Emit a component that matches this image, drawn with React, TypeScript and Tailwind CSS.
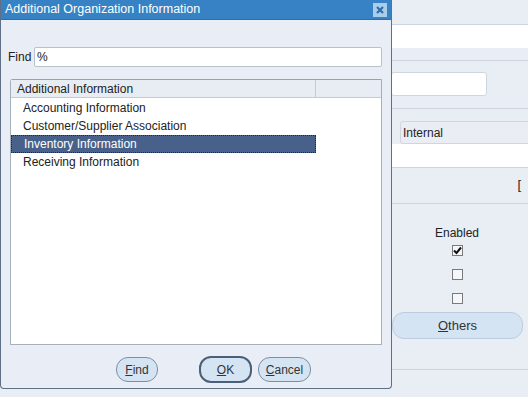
import React from 'react'

const rows = [
  'Accounting Information',
  'Customer/Supplier Association',
  'Inventory Information',
  'Receiving Information',
]

function Pill({ label, u, className }: { label: string; u: number; className: string }) {
  return (
    <button className={`flex items-center justify-center rounded-[12px] text-[12px] text-[#333] ${className}`}>
      {label.slice(0, u)}
      <span className="underline">{label[u]}</span>
      {label.slice(u + 1)}
    </button>
  )
}

function Checkbox({ checked }: { checked?: boolean }) {
  return (
    <div className="w-[11px] h-[11px] border border-[#7a7a7a] bg-[#f4f6f9] flex items-center justify-center">
      {checked && (
        <svg width="9" height="9" viewBox="0 0 9 9">
          <path d="M1 4.5 L3.5 7 L8 1.5" stroke="#111" strokeWidth="2" fill="none" />
        </svg>
      )}
    </div>
  )
}

export default function App() {
  return (
    <div
      className="relative w-[528px] h-[397px] overflow-hidden bg-[#e9edf4] text-[#222]"
      style={{ fontFamily: '"Liberation Sans", Arial, sans-serif' }}
    >
      {/* page behind the dialog */}
      <div className="flex flex-col pl-[391px]">
        <div className="h-[25px] border-b border-[#cdd4de]" />
        <div className="h-[23px] bg-white" />
        <div className="h-[13px] border-b border-[#cdd4de]" />
        <div className="h-[11px]" />
        <div className="h-[24px] w-[96px] bg-white border border-[#cfd6df] rounded-[3px]" />
        <div className="h-[13px] border-b border-[#cdd4de]" />
        <div className="h-[12px]" />
        <div className="h-[23px] ml-[9px] w-[160px] shrink-0 bg-[#eaeef4] border border-[#cfd6df] rounded-l-[3px] flex items-center pl-[2px] text-[12px]">
          Internal
        </div>
        <div className="h-[23px] bg-white" />
        <div className="h-[11px] border-t border-[#cdd4de]" />
        <div className="h-[14px] flex justify-end pr-[7px] text-[13px] leading-[14px]">[</div>
        <div className="h-[12px] border-b border-[#cdd4de]" />
        <div className="flex flex-col items-center pt-[22px] pr-[10px] pl-[5px]">
          <div className="text-[12px] leading-[14px]">Enabled</div>
          <div className="mt-[5px] flex flex-col gap-[13px]">
            <Checkbox checked />
            <Checkbox />
            <Checkbox />
          </div>
        </div>
        <Pill
          label="Others"
          u={0}
          className="mt-[8px] ml-[1px] w-[131px] h-[27px] bg-[#d5e4f3] border border-[#bccbdd] text-[13px]"
        />
        <div className="h-[31px] border-b border-[#cdd4de]" />
      </div>

      {/* dialog */}
      <div className="absolute left-0 top-0 w-[392px] h-[389px] flex flex-col bg-[#e9edf5] border-r border-b border-l border-[#5e6f86] rounded-b-[4px]">
        <div className="h-[20px] shrink-0 bg-[#3782c4] flex items-center justify-between pl-[4px] pr-[4px] border-b border-[#2f6ea8]">
          <span className="text-white text-[12.5px] leading-none">Additional Organization Information</span>
          <div className="w-[14px] h-[14px] bg-[#a9cdeb] flex items-center justify-center">
            <svg width="10" height="10" viewBox="0 0 10 10">
              <path d="M2 2 L8 8 M8 2 L2 8" stroke="#2d6faa" strokeWidth="2.2" />
            </svg>
          </div>
        </div>

        <div className="flex items-center mt-[27px] pl-[7px] pr-[9px]">
          <span className="text-[12px] w-[26px]">Find</span>
          <div className="flex-1 h-[20px] bg-white border border-[#b9c1cc] rounded-[2px] flex items-center pl-[2px] text-[12px]">
            %
          </div>
        </div>

        <div className="mt-[12px] ml-[9px] mr-[9px] h-[266px] flex flex-col bg-white border border-[#a7afba] border-t-[#98a1ad] rounded-tl-[3px]">
          <div className="h-[18px] shrink-0 flex bg-[#e8ecf3] border-b border-[#c3cad5] text-[12px]">
            <div className="w-[305px] border-r border-[#c3cad5] flex items-center pl-[6px]">Additional Information</div>
            <div className="flex-1" />
          </div>
          <div className="flex flex-col pt-[1px] text-[12px]">
            {rows.map((r, i) =>
              i === 2 ? (
                <div
                  key={r}
                  className="h-[18px] w-[305px] flex items-center pl-[12px] bg-[#48618b] text-white border border-dotted border-[#1c2a40]"
                >
                  {r}
                </div>
              ) : (
                <div key={r} className="h-[18px] flex items-center pl-[12px]">
                  {r}
                </div>
              )
            )}
          </div>
        </div>

        <div className="flex items-center mt-[11px] pl-[115px]">
          <Pill label="Find" u={0} className="w-[42px] h-[25px] bg-[#d5e4f3] border border-[#7d8ea4]" />
          <Pill
            label="OK"
            u={0}
            className="ml-[41px] w-[53px] h-[27px] bg-[#d5e4f3] border-2 border-[#4c5f78]"
          />
          <Pill label="Cancel" u={0} className="ml-[6px] w-[53px] h-[25px] bg-[#d5e4f3] border border-[#7d8ea4] rounded-[8px]" />
        </div>
      </div>
    </div>
  )
}
